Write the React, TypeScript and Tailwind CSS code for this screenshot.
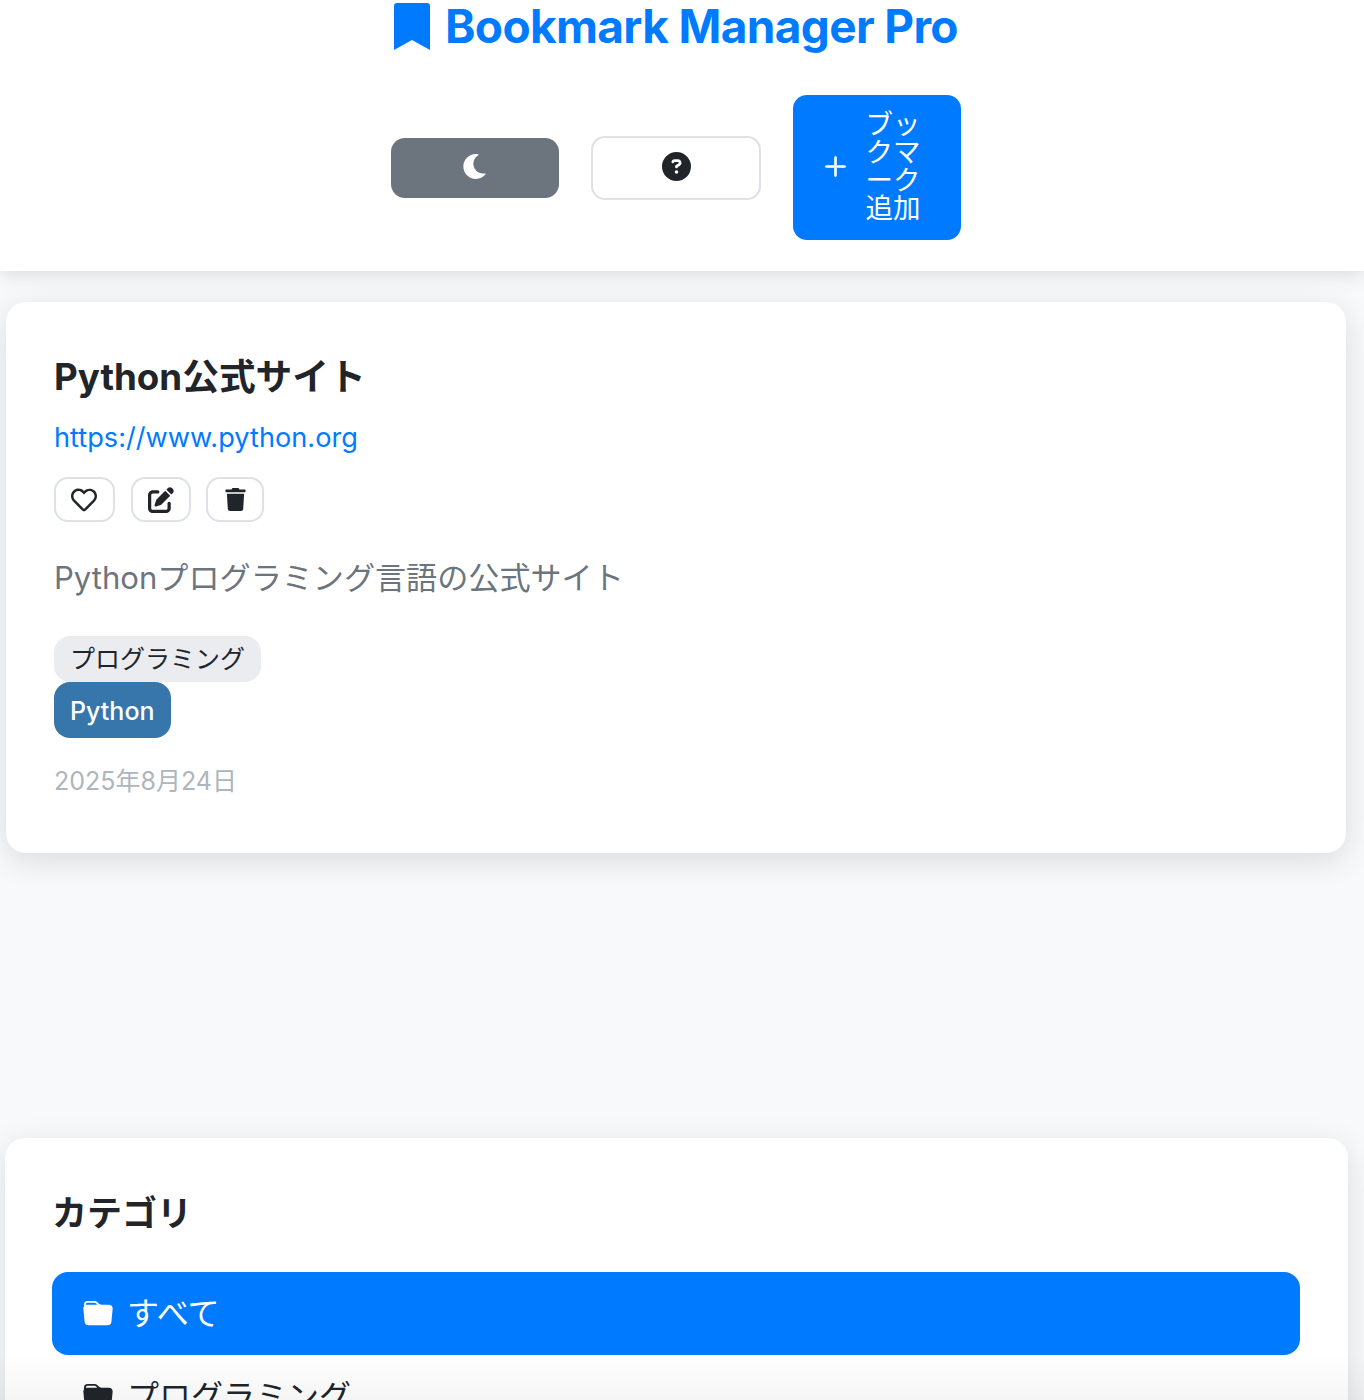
import { BsPlusLg, BsFolderFill } from "react-icons/bs";
import { FaRegHeart, FaTrash, FaMoon } from "react-icons/fa";
import { FaPenToSquare, FaCircleQuestion } from "react-icons/fa6";

const fontStack = "font-['Inter','Noto_Sans_CJK_JP',sans-serif]";

function IconButton({ children, className }: { children: React.ReactNode; className: string }) {
  return (
    <button className={`flex h-[45px] items-center justify-center rounded-[14px] border-2 border-[#dee2e6] bg-white text-[#212529] ${className}`}>
      {children}
    </button>
  );
}

export default function App() {
  return (
    <div className={`relative h-[1400px] overflow-hidden bg-[#f8f9fa] text-[#212529] ${fontStack}`}>
      <header className="flex h-[271px] flex-col items-center bg-white pr-[12px] shadow-[0_2px_20px_rgba(0,0,0,0.14)]">
        <h1 className="flex h-[53px] items-center gap-[15px] text-[46px] leading-[53px] font-bold tracking-[-0.65px] text-[#007bff]">
          <svg viewBox="0 0 36 47" className="h-[47px] w-[36px]" fill="currentColor">
            <path d="M0 47V3a3 3 0 0 1 3-3h30a3 3 0 0 1 3 3v44L18 37Z" />
          </svg>
          Bookmark Manager Pro
        </h1>
        <div className="mt-[42px] flex items-center gap-[32px]">
          <button className="flex h-[60px] w-[168px] items-center justify-center rounded-[14px] bg-[#6c757d] text-white">
            <FaMoon className="size-[25px] -translate-x-[1px] -translate-y-[1px]" />
          </button>
          <button className="flex h-[64px] w-[170px] items-center justify-center rounded-[14px] border-2 border-[#dee2e6] bg-white text-[#212529]">
            <FaCircleQuestion className="size-[29px] -translate-y-[1px]" />
          </button>
          <button className="flex h-[145px] w-[168px] items-center gap-[16px] rounded-[14px] bg-[#007bff] pb-[3px] pl-[29px] text-white">
            <BsPlusLg className="size-[27px] shrink-0 stroke-current stroke-[0.5px]" />
            <span className="w-[56px] text-center text-[27.5px] leading-[28px]">ブックマーク追加</span>
          </button>
        </div>
      </header>

      <main className="px-[6px] pt-[31px]">
        <section className="h-[551px] w-[1340px] rounded-[20px] bg-white p-[48px] shadow-[0_8px_32px_rgba(0,0,0,0.12)]">
          <h3 className="pt-[2px] text-[36.7px] leading-[50px] font-bold">Python公式サイト</h3>
          <a className="mt-[16px] block text-[27.2px] leading-[40px] text-[#007bff]">https://www.python.org</a>
          <div className="mt-[19px] flex gap-[16px]">
            <IconButton className="w-[61px]"><FaRegHeart className="size-[26px] -translate-x-[1px]" /></IconButton>
            <IconButton className="w-[60px]"><FaPenToSquare className="size-[26px]" /></IconButton>
            <IconButton className="w-[58px] -translate-x-[1px]"><FaTrash className="size-[23px]" /></IconButton>
          </div>
          <p className="mt-[33px] text-[31.1px] leading-[46px] text-[#6c757d]">Pythonプログラミング言語の公式サイト</p>
          <div className="mt-[35px] flex flex-col items-start">
            <span className="flex h-[46px] items-center rounded-[16px] bg-[#ebecf0] px-[16px] pt-[1px] text-[25px]">プログラミング</span>
            <span className="flex h-[56px] items-center rounded-[16px] bg-[#3776ab] px-[16px] pt-[3px] text-[25px] font-medium text-white">Python</span>
          </div>
          <p className="mt-[25px] text-[25px] leading-[36px] text-[#adb5bd]">2025年8月24日</p>
        </section>

        <section className="mt-[285px] -ml-[1px] h-[400px] w-[1343px] rounded-[20px] bg-white px-[47px] pt-[50px] shadow-[0_8px_32px_rgba(0,0,0,0.12)]">
          <h3 className="text-[35px] leading-[50px] font-bold">カテゴリ</h3>
          <div className="mt-[34px] flex h-[83px] w-[1248px] items-center gap-[14px] rounded-[16px] bg-[#007bff] px-[31px] text-white">
            <BsFolderFill className="size-[30px]" />
            <span className="text-[32px]">すべて</span>
          </div>
          <div className="flex h-[83px] items-center gap-[14px] px-[31px]">
            <BsFolderFill className="size-[30px]" />
            <span className="text-[32px]">プログラミング</span>
          </div>
        </section>
      </main>

      <div className="absolute inset-x-0 bottom-0 h-[44px] bg-gradient-to-b from-transparent to-black/[0.04]" />
    </div>
  );
}
